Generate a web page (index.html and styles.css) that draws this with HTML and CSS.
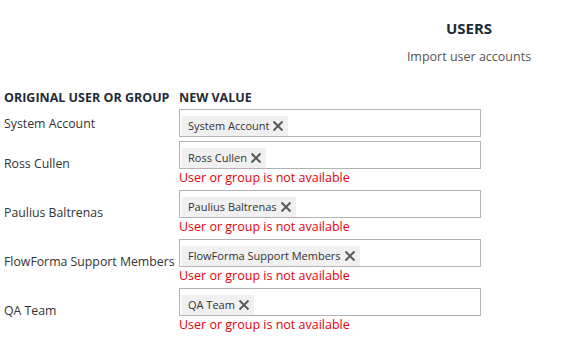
FILE: index.html
```html
<!DOCTYPE html>
<html lang="en">
<head>
  <meta charset="UTF-8" />
  <title>Users - Import</title>
  <link rel="stylesheet" href="styles.css">
</head>
<body>
  <header class="page-head">
    <h1>USERS</h1>
    <p>Import user accounts</p>
  </header>
  <table class="mapping">
    <thead>
      <tr>
        <th class="col-orig">ORIGINAL USER OR GROUP</th>
        <th>NEW VALUE</th>
      </tr>
    </thead>
    <tbody>
      <tr>
        <td class="orig">System Account</td>
        <td>
          <div class="picker"><span class="chip">System Account <svg class="x" viewBox="0 0 12 12"><path d="M1.5 1.5l9 9M10.5 1.5l-9 9"/></svg></span></div>
        </td>
      </tr>
      <tr>
        <td class="orig">Ross Cullen</td>
        <td>
          <div class="picker"><span class="chip">Ross Cullen <svg class="x" viewBox="0 0 12 12"><path d="M1.5 1.5l9 9M10.5 1.5l-9 9"/></svg></span></div>
          <div class="error">User or group is not available</div>
        </td>
      </tr>
      <tr>
        <td class="orig">Paulius Baltrenas</td>
        <td>
          <div class="picker"><span class="chip">Paulius Baltrenas <svg class="x" viewBox="0 0 12 12"><path d="M1.5 1.5l9 9M10.5 1.5l-9 9"/></svg></span></div>
          <div class="error">User or group is not available</div>
        </td>
      </tr>
      <tr>
        <td class="orig">FlowForma Support Members</td>
        <td>
          <div class="picker"><span class="chip">FlowForma Support Members <svg class="x" viewBox="0 0 12 12"><path d="M1.5 1.5l9 9M10.5 1.5l-9 9"/></svg></span></div>
          <div class="error">User or group is not available</div>
        </td>
      </tr>
      <tr>
        <td class="orig">QA Team</td>
        <td>
          <div class="picker"><span class="chip">QA Team <svg class="x" viewBox="0 0 12 12"><path d="M1.5 1.5l9 9M10.5 1.5l-9 9"/></svg></span></div>
          <div class="error">User or group is not available</div>
        </td>
      </tr>
    </tbody>
  </table>
</body>
</html>
```

FILE: styles.css
```css
:root {
  --text: #333;
  --head: #1e2b38;
  --muted: #555;
  --border: #b3b3b3;
  --chip-bg: #f0f0f0;
  --error: #e8000b;
}
* { box-sizing: border-box; margin: 0; padding: 0; }
body { font-family: "Open Sans", Arial, sans-serif; color: var(--text); background: #fff; padding: 0 4px; }

.page-head { padding: 18px 0 0 366px; text-align: center; }
.page-head h1 { font-size: 15px; font-weight: 700; color: var(--head); line-height: 20px; }
.page-head p { font-size: 12.5px; color: var(--muted); margin-top: 10px; line-height: 17px; }

.mapping { border-collapse: collapse; margin-top: 24px; }
.mapping th { text-align: left; font-size: 12.5px; font-weight: 700; color: var(--head); padding: 0; line-height: 18px; }
.mapping .col-orig { width: 175px; }
.mapping td { padding: 2px 0; vertical-align: top; }
.mapping td.orig { font-size: 12.3px; vertical-align: middle; white-space: nowrap; }

.picker { width: 302px; height: 28px; border: 1px solid var(--border); padding: 3px 2px; }
.chip { display: inline-flex; align-items: center; height: 20px; padding: 0 4px 0 6px; background: var(--chip-bg); font-size: 11px; color: var(--text); }
.chip .x { width: 12px; height: 12px; margin-left: 3px; stroke: #5a5a5a; stroke-width: 2; fill: none; }
.error { color: var(--error); font-size: 12.5px; line-height: 16px; padding-top: 1px; }
```
